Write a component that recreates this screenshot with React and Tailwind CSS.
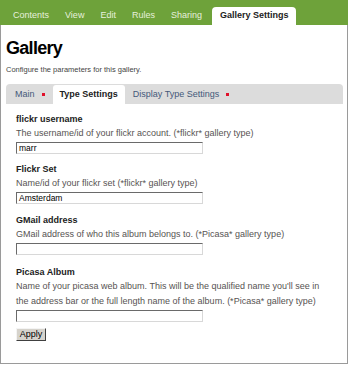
const tabs = ["Contents", "View", "Edit", "Rules", "Sharing"];

const fields = [
  {
    label: "flickr username",
    help: ["The username/id of your flickr account. (*flickr* gallery type)"],
    value: "marr",
    mt: "mt-[8px]",
  },
  {
    label: "Flickr Set",
    help: ["Name/id of your flickr set (*flickr* gallery type)"],
    value: "Amsterdam",
    mt: "mt-[8px]",
  },
  {
    label: "GMail address",
    help: ["GMail address of who this album belongs to. (*Picasa* gallery type)"],
    value: "",
    mt: "mt-[9px]",
  },
  {
    label: "Picasa Album",
    help: [
      "Name of your picasa web album. This will be the qualified name you'll see in",
      "the address bar or the full length name of the album. (*Picasa* gallery type)",
    ],
    value: "",
    mt: "mt-[10px]",
  },
];

const RedDot = () => <span className="ml-[7px] inline-block h-[3px] w-[3px] bg-[#e0102a]" />;

const Field = ({ label, help, value, mt }) => (
  <div className={mt}>
    <div className="text-[9px] font-bold leading-[14px] text-[#222]">{label}</div>
    <div className="whitespace-nowrap text-[9px] leading-[15px] text-[#575352]">
      {help.map((line) => (
        <div key={line}>{line}</div>
      ))}
    </div>
    <div className="mt-[1px] flex h-[12px] w-[187px] items-center border border-b-[#d8d8d8] border-l-[#6a6a6a] border-r-[#d8d8d8] border-t-[#6a6a6a] bg-white pl-[2px] text-[8.5px] text-black">
      {value}
    </div>
  </div>
);

export default function App() {
  return (
    <div className="h-[366px] w-[350px] bg-white font-['Liberation_Sans',Arial,sans-serif]">
      <div className="flex w-[348px] flex-col">
        <header className="flex h-[25px] items-end bg-[#6ea23a] pl-[5px]">
          {tabs.map((t) => (
            <span key={t} className="flex h-[18px] items-center px-[8px] text-[9px] text-[#e6f0dc]">
              {t}
            </span>
          ))}
          <span className="ml-[2px] flex h-[18px] items-center rounded-t-[4px] bg-white px-[8px] text-[9px] font-bold text-[#222]">
            Gallery Settings
          </span>
        </header>

        <div className="h-[339px] border-x border-b border-[#9a9a9a] pl-[5px] pr-[4px]">
          <h1 className="mt-[14px] text-[18px] font-bold leading-[18px] tracking-[-0.7px] text-black">Gallery</h1>
          <p className="mt-[8px] text-[7.5px] leading-[10px] text-[#444]">Configure the parameters for this gallery.</p>

          <div className="mt-[9px] flex h-[20px] items-end rounded-t-[4px] bg-[#dcdcdc]">
            <span className="flex h-[19px] items-center pl-[9px] pr-[8px] text-[9px] text-[#45597a]">
              Main
              <RedDot />
            </span>
            <span className="flex h-[19px] items-center rounded-t-[3px] bg-white px-[7px] text-[9px] font-bold text-[#222]">
              Type Settings
            </span>
            <span className="flex h-[19px] items-center px-[8px] text-[9px] text-[#45597a]">
              Display Type Settings
              <RedDot />
            </span>
          </div>

          <div className="pl-[10px]">
            {fields.map((f) => (
              <Field key={f.label} {...f} />
            ))}
            <button
              type="button"
              className="mt-[6px] flex h-[13px] w-[30px] items-center justify-center border border-b-[#404040] border-l-[#f4f4f4] border-r-[#404040] border-t-[#f4f4f4] bg-[#d6d3cc] text-[9px] leading-none text-black"
            >
              Apply
            </button>
          </div>
        </div>
      </div>
    </div>
  );
}
